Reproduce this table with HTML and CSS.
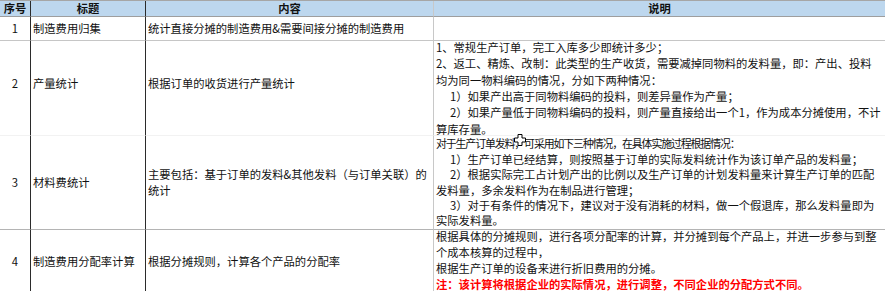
FILE: index.html
```html
<!DOCTYPE html>
<html lang="zh-CN">
<head>
<meta charset="utf-8">
<title>成本核算说明</title>
<link rel="stylesheet" href="styles.css">
</head>
<body>
<div class="sheet">
  <div class="cell hd c1">序号</div>
  <div class="cell hd c2">标题</div>
  <div class="cell hd c3">内容</div>
  <div class="cell hd c4">说明</div>

  <div class="cell r1 c1 num">1</div>
  <div class="cell r1 c2">制造费用归集</div>
  <div class="cell r1 c3">统计直接分摊的制造费用&amp;需要间接分摊的制造费用</div>
  <div class="cell r1 c4"></div>

  <div class="cell r2 c1 num shift">2</div>
  <div class="cell r2 c2 shift">产量统计</div>
  <div class="cell r2 c3 shift">根据订单的收货进行产量统计</div>
  <div class="cell r2 c4 desc">
    <div class="ln">1、常规生产订单，完工入库多少即统计多少；</div>
    <div class="ln">2、返工、精炼、改制：此类型的生产收货，需要减掉同物料的发料量，即：产出、投料</div>
    <div class="ln">均为同一物料编码的情况，分如下两种情况：</div>
    <div class="ln ind">1）如果产出高于同物料编码的投料，则差异量作为产量；</div>
    <div class="ln ind">2）如果产量低于同物料编码的投料，则产量直接给出一个1，作为成本分摊使用，不计</div>
    <div class="ln">算库存量。</div>
  </div>

  <div class="cell r3 c1 num">3</div>
  <div class="cell r3 c2">材料费统计</div>
  <div class="cell r3 c3 desc">
    <div class="ln">主要包括：基于订单的发料&amp;其他发料（与订单关联）的</div>
    <div class="ln">统计</div>
  </div>
  <div class="cell r3 c4 desc">
    <div class="ln tight">对于生产订单发料，可采用如下三种情况，在具体实施过程根据情况：</div>
    <div class="ln ind">1）生产订单已经结算，则按照基于订单的实际发料统计作为该订单产品的发料量；</div>
    <div class="ln ind">2）根据实际完工占计划产出的比例以及生产订单的计划发料量来计算生产订单的匹配</div>
    <div class="ln">发料量，多余发料作为在制品进行管理；</div>
    <div class="ln ind">3）对于有条件的情况下，建议对于没有消耗的材料，做一个假退库，那么发料量即为</div>
    <div class="ln">实际发料量。</div>
  </div>

  <div class="cell r4 c1 num">4</div>
  <div class="cell r4 c2">制造费用分配率计算</div>
  <div class="cell r4 c3">根据分摊规则，计算各个产品的分配率</div>
  <div class="cell r4 c4 desc">
    <div class="ln">根据具体的分摊规则，进行各项分配率的计算，并分摊到每个产品上，并进一步参与到整</div>
    <div class="ln">个成本核算的过程中，</div>
    <div class="ln">根据生产订单的设备来进行折旧费用的分摊。</div>
    <div class="ln note">注：该计算将根据企业的实际情况，进行调整，不同企业的分配方式不同。</div>
  </div>

  <svg class="cursor" width="12" height="12" viewBox="0 0 12 12" aria-hidden="true">
    <path d="M4 0.5 H8 V4 H11.5 V8 H8 V11.5 H4 V8 H0.5 V4 H4 Z" fill="#fff" stroke="#000" stroke-width="1"/>
  </svg>
</div>
</body>
</html>
```

FILE: styles.css
```css
html, body {
  margin: 0;
  padding: 0;
  background: #ffffff;
}

body {
  font-family: "Noto Sans CJK SC", "Noto Sans", sans-serif;
  font-size: 11.3px;
  color: #111111;
  overflow: hidden;
}

.sheet {
  position: relative;
  display: grid;
  grid-template-columns: 31px 115px 288px 451px;
  grid-template-rows: 16px 24px 95px 94px 63px;
  border-top: 1px solid #a6a6a6;
  width: 885px;
}

.cell {
  box-sizing: border-box;
  display: flex;
  align-items: center;
  border-bottom: 1px solid #d0d0d0;
  white-space: nowrap;
  line-height: 15px;
  overflow: visible;
}

.c1, .c2 {
  border-right: 1px solid #2b2b2b;
}

.c3 {
  border-right: 1px solid #c8c8c8;
  padding-left: 2px;
}

.c2 {
  padding-left: 2px;
}

.c4 {
  padding-left: 2px;
}

.num {
  justify-content: center;
}

.hd {
  background: #bdd7ee;
  font-weight: bold;
  justify-content: center;
  border-bottom: 1px solid #9e9e9e;
  padding-left: 0;
}

.r1 {
  border-bottom-color: #c6c6c6;
}

.r2 {
  border-bottom-color: #f2f2f2;
}

.r3 {
  border-bottom-color: #b4b4b4;
}

.r4 {
  border-bottom-color: #c6c6c6;
}

.shift {
  padding-bottom: 9px;
}

.desc {
  flex-direction: column;
  align-items: flex-start;
  justify-content: center;
}

.r2.desc {
  line-height: 16.4px;
}

.r3.desc {
  line-height: 15.4px;
}

.r4.desc {
  line-height: 15.6px;
}

.ln.ind {
  padding-left: 14px;
}

.ln.tight {
  font-size: 10.9px;
  letter-spacing: -1.1px;
}

.note {
  color: #ff0000;
  font-weight: bold;
  margin-top: 1px;
}

.cursor {
  position: absolute;
  left: 514px;
  top: 133px;
}
```
